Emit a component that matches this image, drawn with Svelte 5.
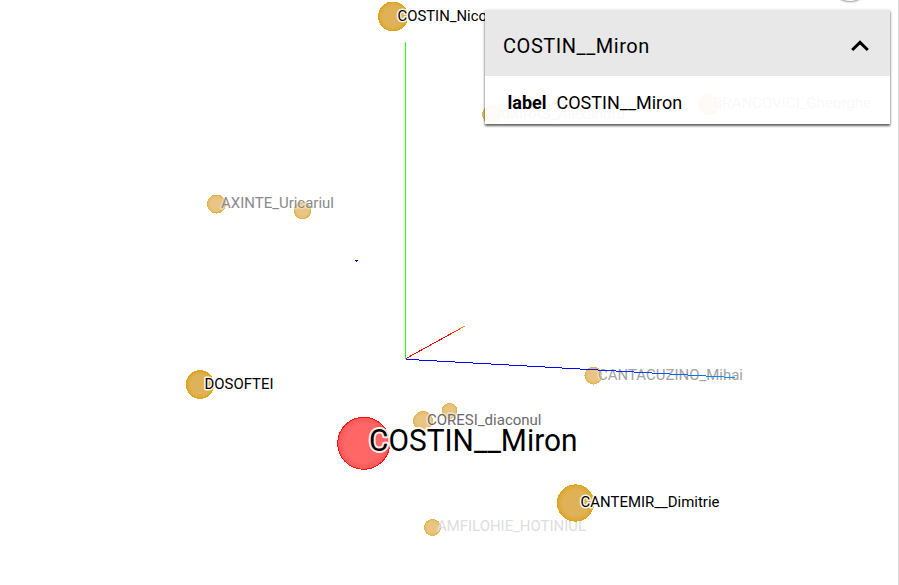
<script>
  const nodes = [
    { x: 393, y: 16.5, r: 15, label: 'COSTIN_Nicolae', tx: 397.5, ty: 21, w: 109, size: 15, ink: '#000' },
    { x: 491.5, y: 114.5, r: 9.5, label: 'AMIRAS_Alexandru', tx: 496, ty: 119, w: 129, size: 15, ink: '#999', soft: 0.5 },
    { x: 709, y: 104.5, r: 10.5, label: 'BRANCOVICI_Gheorghe', tx: 713, ty: 108, w: 158, size: 15, ink: '#999', soft: 0.5 },
    { x: 302.5, y: 210.5, r: 8.8, soft: 0.45 },
    { x: 216.5, y: 204, r: 9.5, label: 'AXINTE_Uricariul', tx: 221, ty: 208, w: 113, size: 15, ink: '#8a8a8a', soft: 0.35 },
    { x: 200, y: 384.5, r: 14.3, label: 'DOSOFTEI', tx: 204.5, ty: 389, w: 69, size: 15, ink: '#000' },
    { x: 593.5, y: 375.5, r: 9, label: 'CANTACUZINO_Mihai', tx: 598, ty: 380, w: 145, size: 15, ink: '#a2a2a2', soft: 0.4 },
    { x: 449.5, y: 411, r: 8, soft: 0.5 },
    { x: 423, y: 421, r: 10, label: 'CORESI_diaconul', tx: 427, ty: 425, w: 114.5, size: 15, ink: '#6a6a6a', soft: 0.5 },
    { x: 432.5, y: 527.5, r: 8.5, label: 'AMFILOHIE_HOTINIUL', tx: 437, ty: 531, w: 149, size: 15, ink: '#dedede', soft: 0.15 },
    { x: 575.5, y: 503, r: 18.6, label: 'CANTEMIR__Dimitrie', tx: 580.5, ty: 507, w: 139, size: 15, ink: '#000' },
    { x: 363.7, y: 443.3, r: 26.5, label: 'COSTIN__Miron', tx: 369, ty: 451, w: 208.5, size: 30.5, ink: '#000', selected: true }
  ];
  const selected = nodes.find((n) => n.selected);
  let open = $state(true);
</script>

<main>
  <svg class="scene" width="899" height="585" viewBox="0 0 899 585">
    <defs>
      <radialGradient id="gold"><stop offset="0.7" stop-color="#dfb257" /><stop offset="1" stop-color="#dca630" /></radialGradient>
      <radialGradient id="pale"><stop offset="0.6" stop-color="#e8c583" /><stop offset="1" stop-color="#e6bb68" /></radialGradient>
      <radialGradient id="red"><stop offset="0.76" stop-color="#ff6666" /><stop offset="1" stop-color="#f75555" /></radialGradient>
      <linearGradient id="xAxis"><stop offset="0.7" stop-color="#f00" /><stop offset="1" stop-color="#ff9500" /></linearGradient>
      <linearGradient id="zAxis"><stop offset="0.5" stop-color="#00f" /><stop offset="1" stop-color="#0099ff" /></linearGradient>
    </defs>
    {#each nodes as n}
      <circle
        cx={n.x} cy={n.y} r={n.r - 0.5}
        fill={n.selected ? 'url(#red)' : n.soft ? 'url(#pale)' : 'url(#gold)'}
        stroke={n.selected ? '#ff1010' : n.soft ? '#e2b54e' : '#dca410'}
        shape-rendering="crispEdges"
      />
      {#if n.label}
        <text
          x={n.tx} y={n.ty} textLength={n.w} lengthAdjust="spacingAndGlyphs"
          font-size={n.size} fill={n.ink} stroke="#fff"
          stroke-opacity={n.soft ?? 0.9} stroke-width={n.selected ? 4 : 3}
        >{n.label}</text>
      {/if}
    {/each}
    <g class="axes" shape-rendering="crispEdges">
      <path d="M405.5 42V359" stroke="#2f0" />
      <path d="M406 358.5L465 326" stroke="url(#xAxis)" />
      <path d="M406 359.3L735 377.6" stroke="url(#zAxis)" />
    </g>
    <path d="M355 260h3v1h-1v1h-1v-1h-1z" fill="#00f" shape-rendering="crispEdges" />
  </svg>

  <div class="round"></div>
  <div class="edge"></div>

  <aside class="panel">
    <button class="head" onclick={() => (open = !open)} aria-label="Toggle details">
      <span>{selected.label}</span>
      <svg width="20" height="14" viewBox="0 0 20 14"><path d="M2.2 11L10 3.4L17.8 11" /></svg>
    </button>
    {#if open}
      <div class="row"><b>label</b><span>{selected.label}</span></div>
    {/if}
  </aside>
</main>

<style>
  :global(body) { background: #fff; overflow: hidden; }
  main {
    position: relative;
    width: 899px;
    height: 585px;
    overflow: hidden;
    font-family: Roboto, 'Liberation Sans', sans-serif;
    color: #000;
  }
  .scene { display: block; }
  .scene text { paint-order: stroke; stroke-linejoin: round; }
  .axes { fill: none; stroke-width: 1; }
  .round {
    position: absolute;
    left: 830px;
    top: -39px;
    width: 40px;
    height: 40px;
    border-radius: 50%;
    background: #fff;
    box-shadow: 0 1px 2px #999;
  }
  .edge { position: absolute; right: 0; top: 0; width: 1px; height: 100%; background: #dcdcdc; }
  .panel {
    position: absolute;
    left: 485px;
    top: 10px;
    width: 405px;
    background: rgba(255, 255, 255, 0.93);
    box-shadow: 0 2px 2px rgba(0, 0, 0, 0.5), 0 1px 3px rgba(0, 0, 0, 0.3);
  }
  .head {
    display: flex;
    align-items: center;
    justify-content: space-between;
    width: 100%;
    height: 66px;
    padding: 5px 20px 0 18px;
    border: 0;
    background: #e8e8e8;
    font: 400 20px/28px Roboto, 'Liberation Sans', sans-serif;
    letter-spacing: 0.55px;
    color: #000;
    text-align: left;
  }
  .head path { fill: none; stroke: #000; stroke-width: 3; }
  .row {
    display: flex;
    align-items: center;
    gap: 10px;
    height: 48px;
    padding: 5px 0 0 22.5px;
    box-sizing: border-box;
    font-size: 18px;
  }
  .row b { font-weight: 700; }
</style>
